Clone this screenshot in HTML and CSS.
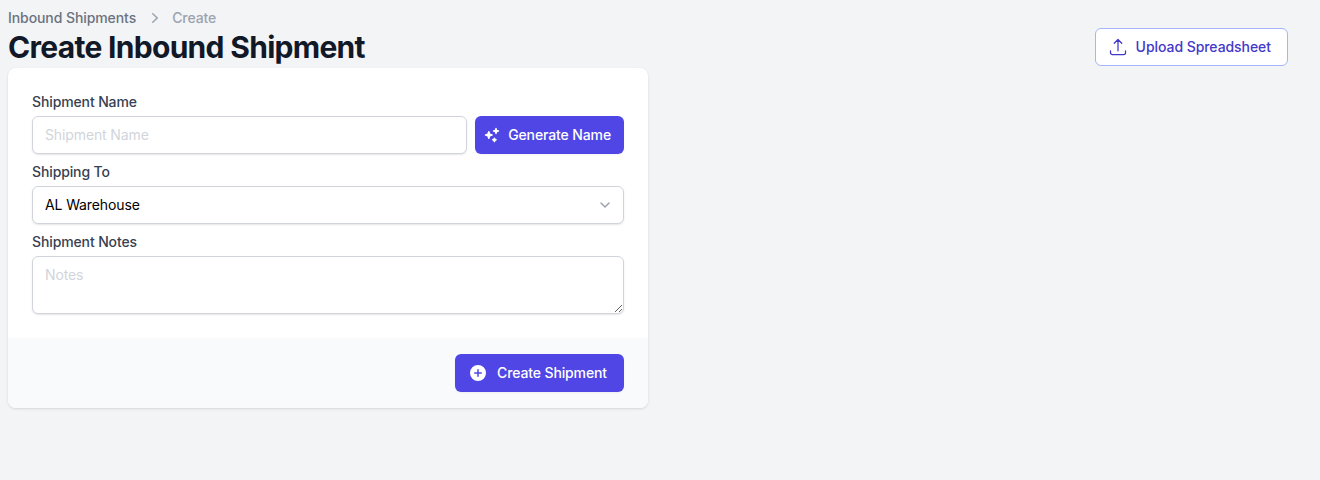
FILE: index.html
```html
<!DOCTYPE html>
<html lang="en">
<head>
    <meta charset="UTF-8">
    <meta name="viewport" content="width=device-width, initial-scale=1.0">
    <title>Create Inbound Shipment</title>
    <link rel="stylesheet" href="styles.css">
</head>
<body>
    <div class="page">
        <div class="page-header">
            <div>
                <nav class="breadcrumbs">
                    <span class="crumb-link">Inbound Shipments</span>
                    <svg class="crumb-sep" viewBox="0 0 20 20" fill="currentColor"><path fill-rule="evenodd" d="M7.21 14.77a.75.75 0 0 1 .02-1.06L11.168 10 7.23 6.29a.75.75 0 1 1 1.04-1.08l4.5 4.25a.75.75 0 0 1 0 1.08l-4.5 4.25a.75.75 0 0 1-1.06-.02z" clip-rule="evenodd"/></svg>
                    <span class="crumb-current">Create</span>
                </nav>
                <h1>Create Inbound Shipment</h1>
            </div>
            <button class="btn btn-outline" type="button">
                <svg class="btn-icon" viewBox="0 0 24 24" fill="none" stroke="currentColor" stroke-width="1.5" stroke-linecap="round" stroke-linejoin="round"><path d="M3 16.5v2.25A2.25 2.25 0 0 0 5.25 21h13.5A2.25 2.25 0 0 0 21 18.75V16.5m-13.5-9L12 3m0 0l4.5 4.5M12 3v13.5"/></svg>
                Upload Spreadsheet
            </button>
        </div>

        <form class="card">
            <div class="card-body">
                <div class="field">
                    <label for="name">Shipment Name</label>
                    <div class="name-row">
                        <input class="control" id="name" type="text" placeholder="Shipment Name">
                        <button class="btn btn-primary btn-generate" type="button">
                            <svg class="btn-icon btn-icon-small" viewBox="0 0 20 20" fill="currentColor"><path d="M15.98 1.804a1 1 0 0 0-1.96 0l-.24 1.192a1 1 0 0 1-.784.785l-1.192.238a1 1 0 0 0 0 1.962l1.192.238a1 1 0 0 1 .785.785l.238 1.192a1 1 0 0 0 1.962 0l.238-1.192a1 1 0 0 1 .785-.785l1.192-.238a1 1 0 0 0 0-1.962l-1.192-.238a1 1 0 0 1-.785-.785l-.238-1.192zM6.949 5.684a1 1 0 0 0-1.898 0l-.683 2.051a1 1 0 0 1-.633.633l-2.051.683a1 1 0 0 0 0 1.898l2.051.684a1 1 0 0 1 .633.632l.683 2.051a1 1 0 0 0 1.898 0l.683-2.051a1 1 0 0 1 .633-.633l2.051-.683a1 1 0 0 0 0-1.898l-2.051-.683a1 1 0 0 1-.633-.633L6.95 5.684zM13.949 13.684a1 1 0 0 0-1.898 0l-.184.551a1 1 0 0 1-.632.633l-.551.183a1 1 0 0 0 0 1.898l.551.183a1 1 0 0 1 .633.633l.183.551a1 1 0 0 0 1.898 0l.184-.551a1 1 0 0 1 .632-.633l.551-.183a1 1 0 0 0 0-1.898l-.551-.184a1 1 0 0 1-.633-.632l-.183-.551z"/></svg>
                            Generate Name
                        </button>
                    </div>
                </div>
                <div class="field">
                    <label for="to">Shipping To</label>
                    <div class="select-wrap">
                        <select class="control" id="to">
                            <option>AL Warehouse</option>
                        </select>
                        <svg class="select-arrow" viewBox="0 0 20 20" fill="none" stroke="currentColor" stroke-width="1.5" stroke-linecap="round" stroke-linejoin="round"><path d="M6 8l4 4 4-4"/></svg>
                    </div>
                </div>
                <div class="field">
                    <label for="notes">Shipment Notes</label>
                    <textarea class="control" id="notes" placeholder="Notes"></textarea>
                </div>
            </div>
            <div class="card-footer">
                <button class="btn btn-primary btn-create" type="button">
                    <svg class="btn-icon" viewBox="0 0 20 20" fill="currentColor"><path fill-rule="evenodd" d="M10 18a8 8 0 1 0 0-16 8 8 0 0 0 0 16zm.75-11.25a.75.75 0 0 0-1.5 0v2.5h-2.5a.75.75 0 0 0 0 1.5h2.5v2.5a.75.75 0 0 0 1.5 0v-2.5h2.5a.75.75 0 0 0 0-1.5h-2.5v-2.5z" clip-rule="evenodd"/></svg>
                    Create Shipment
                </button>
            </div>
        </form>
    </div>
</body>
</html>
```

FILE: styles.css
```css
* {
    box-sizing: border-box;
}
body {
    margin: 0;
    min-height: 480px;
    background-color: #f3f4f6;
    font-family: Inter, "Liberation Sans", sans-serif;
    font-size: 14px;
    line-height: 20px;
    letter-spacing: -0.12px;
    color: #111827;
}
.page {
    padding: 8px 32px 0 8px;
}
.page-header {
    display: flex;
    justify-content: space-between;
    align-items: flex-start;
}
.breadcrumbs {
    display: flex;
    align-items: center;
    height: 20px;
    font-weight: 500;
    letter-spacing: -0.08px;
}
.crumb-link {
    color: #6b7280;
}
.crumb-sep {
    width: 20px;
    height: 20px;
    margin: 0 3px 0 9px;
    color: #9ca3af;
}
.crumb-current {
    margin-left: 4px;
    color: #9ca3af;
}
h1 {
    margin: 0;
    height: 40px;
    font-size: 30px;
    line-height: 38px;
    font-weight: 700;
    letter-spacing: -0.7px;
    color: #111827;
}
.btn {
    display: inline-flex;
    align-items: center;
    height: 38px;
    border-radius: 6px;
    font-family: inherit;
    font-size: 14px;
    line-height: 20px;
    font-weight: 500;
    letter-spacing: inherit;
    white-space: nowrap;
    cursor: pointer;
}
.btn-icon {
    width: 20px;
    height: 20px;
    margin-right: 8px;
    flex-shrink: 0;
}
.btn-icon-small {
    width: 16px;
    height: 16px;
}
.btn-primary {
    border: none;
    background-color: #4f46e5;
    color: #fff;
    box-shadow: 0 1px 2px rgba(0, 0, 0, 0.05);
}
.btn-outline {
    margin-top: 20px;
    padding: 0 16px 0 12px;
    border: 1px solid #a5b4fc;
    background-color: #fff;
    letter-spacing: -0.06px;
    color: #4338ca;
}
.card {
    width: 640px;
    background-color: #fff;
    border-radius: 8px;
    overflow: hidden;
    box-shadow: 0 1px 3px rgba(0, 0, 0, 0.1), 0 1px 2px -1px rgba(0, 0, 0, 0.1);
}
.card-body {
    padding: 24px;
}
.field {
    margin-bottom: 8px;
}
.field:last-child {
    margin-bottom: 0;
}
label {
    display: block;
    margin-bottom: 4px;
    font-weight: 500;
    color: #374151;
}
.control {
    display: block;
    width: 100%;
    height: 38px;
    padding: 8px 12px;
    border: 1px solid #d1d5db;
    border-radius: 6px;
    background-color: #fff;
    font-family: inherit;
    font-size: 14px;
    line-height: 20px;
    letter-spacing: inherit;
    color: #000;
    box-shadow: 0 1px 2px rgba(0, 0, 0, 0.1);
}
.control::placeholder {
    color: #d1d5db;
    opacity: 1;
}
.name-row {
    display: flex;
    gap: 8px;
}
.name-row .control {
    flex: 1;
    min-width: 0;
    padding: 7px 12px 9px;
}
.btn-generate {
    padding: 0 13px 0 9px;
}
.btn-create {
    padding: 0 17px 0 13px;
}
.btn-create .btn-icon {
    margin-right: 9px;
}
.select-wrap {
    position: relative;
}
select.control {
    appearance: none;
}
.select-arrow {
    position: absolute;
    top: 9px;
    right: 9px;
    width: 20px;
    height: 20px;
    color: #9ca3af;
    pointer-events: none;
}
textarea.control {
    height: 58px;
    resize: vertical;
}
.card-footer {
    display: flex;
    justify-content: flex-end;
    padding: 16px 24px;
    background-color: #f9fafb;
}
```
